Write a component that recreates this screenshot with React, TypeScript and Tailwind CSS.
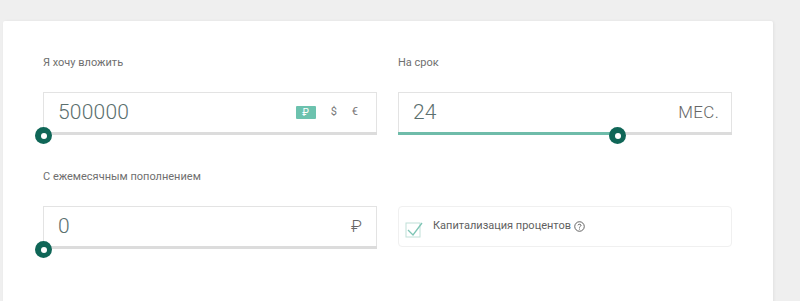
import React from "react";

function Thumb({ left }: { left: string }) {
  return (
    <div
      className="absolute top-[-5px] w-[17px] h-[17px] -ml-[8px] rounded-full bg-[#0f6657] flex items-center justify-center"
      style={{ left }}
    >
      <div className="w-[6px] h-[6px] rounded-full bg-white"></div>
    </div>
  );
}

function SliderInput({
  value,
  right,
  fill,
}: {
  value: string;
  right: React.ReactNode;
  fill: number;
}) {
  return (
    <div className="relative w-[334px]">
      <div className="h-[40px] border border-[#e3e3e3] border-b-0 bg-white flex items-center justify-between pl-[14px] pr-[12px]">
        <span className="text-[21px] font-light text-[#5b6f6e] tracking-[0.2px]">
          {value}
        </span>
        {right}
      </div>
      <div className="relative h-[3px] bg-[#dcdcdc]">
        <div
          className="absolute left-0 top-0 h-full bg-[#6fbcaa]"
          style={{ width: `${fill}%` }}
        ></div>
        <Thumb left={`${fill}%`} />
      </div>
    </div>
  );
}

export default function App() {
  return (
    <div
      className="w-[800px] h-[301px] bg-[#efefef] pt-[21px] pl-[3px] overflow-hidden"
      style={{ fontFamily: "Roboto, 'Liberation Sans', sans-serif" }}
    >
      <div className="w-[770px] h-[290px] bg-white rounded-[2px] shadow-[1px_0_3px_rgba(0,0,0,0.06)] pl-[40px] pt-[35px]">
        <div className="flex gap-[21px]">
          <div className="flex flex-col">
            <div className="text-[11px] text-[#6f6f6f] h-[14px] leading-[14px]">Я хочу вложить</div>
            <div className="mt-[22px]">
              <SliderInput
                value="500000"
                fill={0}
                right={
                  <div className="flex items-center gap-[15px] text-[11px] text-[#777] mr-[6px]">
                    <span className="bg-[#6cc2ae] text-white text-[10px] w-[20px] h-[13px] flex items-center justify-center rounded-[1px]">
                      ₽
                    </span>
                    <span>$</span>
                    <span>€</span>
                  </div>
                }
              />
            </div>
          </div>
          <div className="flex flex-col">
            <div className="text-[11px] text-[#6f6f6f] h-[14px] leading-[14px]">На срок</div>
            <div className="mt-[22px]">
              <SliderInput
                value="24"
                fill={65.6}
                right={<span className="text-[17px] font-light text-[#666] tracking-[0.3px]">МЕС.</span>}
              />
            </div>
          </div>
        </div>

        <div className="flex gap-[21px] mt-[35px]">
          <div className="flex flex-col">
            <div className="text-[11px] text-[#6f6f6f] h-[14px] leading-[14px]">С ежемесячным пополнением</div>
            <div className="mt-[22px]">
              <SliderInput
                value="0"
                fill={0}
                right={<span className="text-[17px] font-light text-[#666] mr-[2px]">₽</span>}
              />
            </div>
          </div>
          <div className="flex flex-col justify-end">
            <div className="w-[334px] h-[41px] border border-[#f0f0f0] rounded-[4px] flex items-center pl-[6px] mb-[2px]">
              <svg width="18" height="18" viewBox="0 0 18 18" className="mt-[5px]">
                <rect x="1" y="3" width="14" height="14" fill="none" stroke="#bfe0d8" strokeWidth="1" />
                <path d="M3 10 L8 15 L17 3" fill="none" stroke="#7ec5b5" strokeWidth="1.3" />
              </svg>
              <span className="ml-[10px] text-[11px] text-[#5f5f5f]">Капитализация процентов</span>
              <svg width="11" height="11" viewBox="0 0 12 12" className="ml-[3px]">
                <circle cx="6" cy="6" r="5.2" fill="none" stroke="#555" strokeWidth="1" />
                <path d="M4.3 4.7 C4.3 3.2 7.7 3.2 7.7 4.7 C7.7 5.8 6 5.8 6 7.2" fill="none" stroke="#555" strokeWidth="1" />
                <circle cx="6" cy="8.8" r="0.6" fill="#555" />
              </svg>
            </div>
          </div>
        </div>
      </div>
    </div>
  );
}
